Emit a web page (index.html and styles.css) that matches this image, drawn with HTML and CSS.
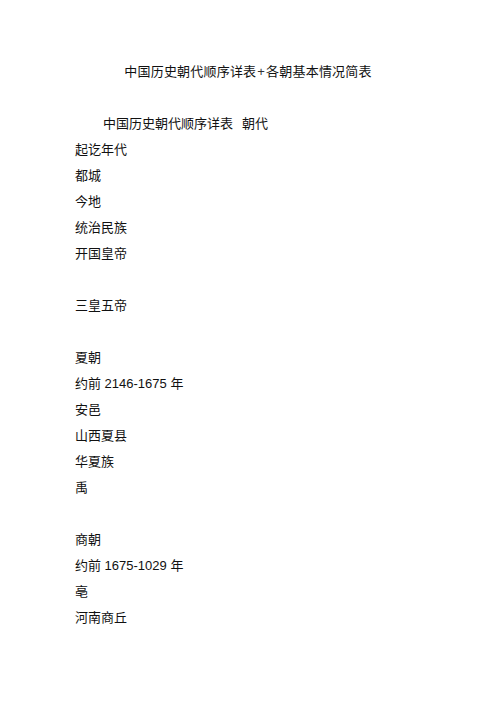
FILE: index.html
```html
<!DOCTYPE html>
<html lang="zh-CN">
<head>
<meta charset="utf-8">
<title>中国历史朝代顺序详表+各朝基本情况简表</title>
<link rel="stylesheet" href="styles.css">
</head>
<body>
<main class="page">
  <h1 class="title">中国历史朝代顺序详表<span class="plus">+</span>各朝基本情况简表</h1>
  <section class="block">
    <p class="heading">中国历史朝代顺序详表<span class="gap">朝代</span></p>
    <p class="line">起讫年代</p>
    <p class="line">都城</p>
    <p class="line">今地</p>
    <p class="line">统治民族</p>
    <p class="line">开国皇帝</p>
  </section>
  <section class="block">
    <p class="line">三皇五帝</p>
  </section>
  <section class="block">
    <p class="line">夏朝</p>
    <p class="line">约前 2146-1675 年</p>
    <p class="line">安邑</p>
    <p class="line">山西夏县</p>
    <p class="line">华夏族</p>
    <p class="line">禹</p>
  </section>
  <section class="block">
    <p class="line">商朝</p>
    <p class="line">约前 1675-1029 年</p>
    <p class="line">亳</p>
    <p class="line">河南商丘</p>
  </section>
</main>
</body>
</html>
```

FILE: styles.css
```css
html, body {
  margin: 0;
  padding: 0;
  background: #ffffff;
}

body {
  font-family: "Liberation Sans", "Noto Sans CJK SC", sans-serif;
  font-size: 13px;
  line-height: 26px;
  color: #111111;
}

.page {
  padding: 59px 75px 0 75px;
  display: flex;
  flex-direction: column;
}

.title {
  margin: 0 0 26px 0;
  font-size: 13px;
  font-weight: normal;
  line-height: 26px;
  text-align: center;
  letter-spacing: 0.2px;
}

.plus {
  font-weight: 300;
  margin: 0 1px;
  color: #333333;
}

.block {
  margin: 0 0 26px 0;
}

.line,
.heading {
  margin: 0;
  white-space: nowrap;
}

.heading {
  text-indent: 28px;
}

.gap {
  margin-left: 9px;
}
```
